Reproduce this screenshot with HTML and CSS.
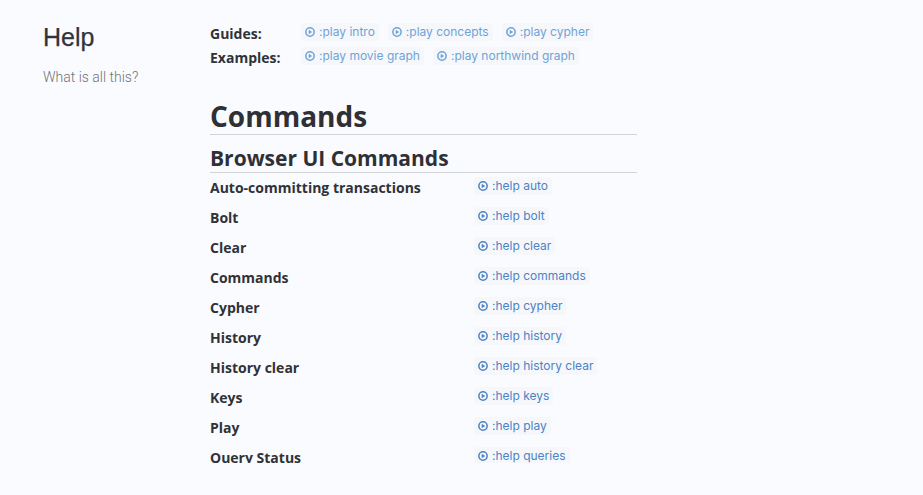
FILE: index.html
```html
<!DOCTYPE html>
<html lang="en">
<head>
<meta charset="utf-8">
<title>Help</title>
<link rel="stylesheet" href="styles.css">
</head>
<body>
<svg class="defs" width="0" height="0" aria-hidden="true"><symbol id="play" viewBox="0 0 10 10"><circle cx="5" cy="5" r="4.15" fill="none" stroke="currentColor" stroke-width="1.5"/><path d="M3.7 2.7 7.2 5 3.7 7.3Z" fill="currentColor"/></symbol></svg>
<div class="page">
  <aside class="side">
    <h1 class="title">Help</h1>
    <p class="subtitle">What is all this?</p>
  </aside>
  <main class="main">
    <div class="quick">
      <div class="quick-row">
        <strong class="quick-label">Guides:</strong>
        <a class="pill light"><svg class="ico"><use href="#play"/></svg>:play intro</a>
        <a class="pill light"><svg class="ico"><use href="#play"/></svg>:play concepts</a>
        <a class="pill light"><svg class="ico"><use href="#play"/></svg>:play cypher</a>
      </div>
      <div class="quick-row">
        <strong class="quick-label">Examples:</strong>
        <a class="pill light"><svg class="ico"><use href="#play"/></svg>:play movie graph</a>
        <a class="pill light"><svg class="ico"><use href="#play"/></svg>:play northwind graph</a>
      </div>
    </div>
    <h2 class="h-commands">Commands</h2>
    <h3 class="h-browser">Browser UI Commands</h3>
    <div class="rows">
      <div class="row"><strong class="row-name">Auto-committing transactions</strong><a class="pill"><svg class="ico"><use href="#play"/></svg>:help auto</a></div>
      <div class="row"><strong class="row-name">Bolt</strong><a class="pill"><svg class="ico"><use href="#play"/></svg>:help bolt</a></div>
      <div class="row"><strong class="row-name">Clear</strong><a class="pill"><svg class="ico"><use href="#play"/></svg>:help clear</a></div>
      <div class="row"><strong class="row-name">Commands</strong><a class="pill"><svg class="ico"><use href="#play"/></svg>:help commands</a></div>
      <div class="row"><strong class="row-name">Cypher</strong><a class="pill"><svg class="ico"><use href="#play"/></svg>:help cypher</a></div>
      <div class="row"><strong class="row-name">History</strong><a class="pill"><svg class="ico"><use href="#play"/></svg>:help history</a></div>
      <div class="row"><strong class="row-name">History clear</strong><a class="pill"><svg class="ico"><use href="#play"/></svg>:help history clear</a></div>
      <div class="row"><strong class="row-name">Keys</strong><a class="pill"><svg class="ico"><use href="#play"/></svg>:help keys</a></div>
      <div class="row"><strong class="row-name">Play</strong><a class="pill"><svg class="ico"><use href="#play"/></svg>:help play</a></div>
      <div class="row"><strong class="row-name">Query Status</strong><a class="pill"><svg class="ico"><use href="#play"/></svg>:help queries</a></div>
    </div>
  </main>
</div>
</body>
</html>
```
FILE: styles.css
```css
* { box-sizing: border-box; }
html, body { margin: 0; height: 100%; background: #fafbff; overflow: hidden; }
.defs { position: absolute; }
.page { display: flex; height: 463px; overflow: hidden; }
.side { width: 210px; flex: none; padding: 22px 0 0 43px; }
.title { margin: 0; font: 400 25px/30px "Liberation Sans", sans-serif; color: #30333a; -webkit-text-stroke: 0.25px #30333a; }
.subtitle { margin: 15px 0 0; font: 300 14px/20px Roboto, sans-serif; color: #6f7278; }
.main { width: 427px; flex: none; padding-top: 20px; }
.quick-row { display: flex; height: 24px; align-items: flex-start; }
.quick-label { width: 91px; flex: none; margin-top: 2px; font: 700 14px/24px "Open Sans", sans-serif; color: #303237; }
.quick-row .pill { margin: 3px 9px 0 0; }
.pill { display: inline-flex; align-items: center; height: 18px; padding: 0 4px; border-radius: 3px; background: #f6f7fa; font: 400 12px/18px Inter, sans-serif; color: #4a83c6; white-space: nowrap; }
.pill.light { color: #6ea3d8; }
.ico { width: 10px; height: 10px; margin-right: 4px; flex: none; }
.h-commands { margin: 31px 0 0; font: 700 28px/34px "Open Sans", sans-serif; color: #2e3035; border-bottom: 1px solid #d2d4d9; height: 36px; }
.h-browser { margin: 10px 0 0; font: 700 21px/26px "Open Sans", sans-serif; color: #2e3035; border-bottom: 1px solid #d2d4d9; height: 28px; }
.row { display: flex; height: 30px; align-items: flex-start; }
.row-name { width: 264px; flex: none; padding-top: 4px; font: 700 14px/22px "Open Sans", sans-serif; color: #303237; }
.row .pill { margin-top: 4px; }
```
